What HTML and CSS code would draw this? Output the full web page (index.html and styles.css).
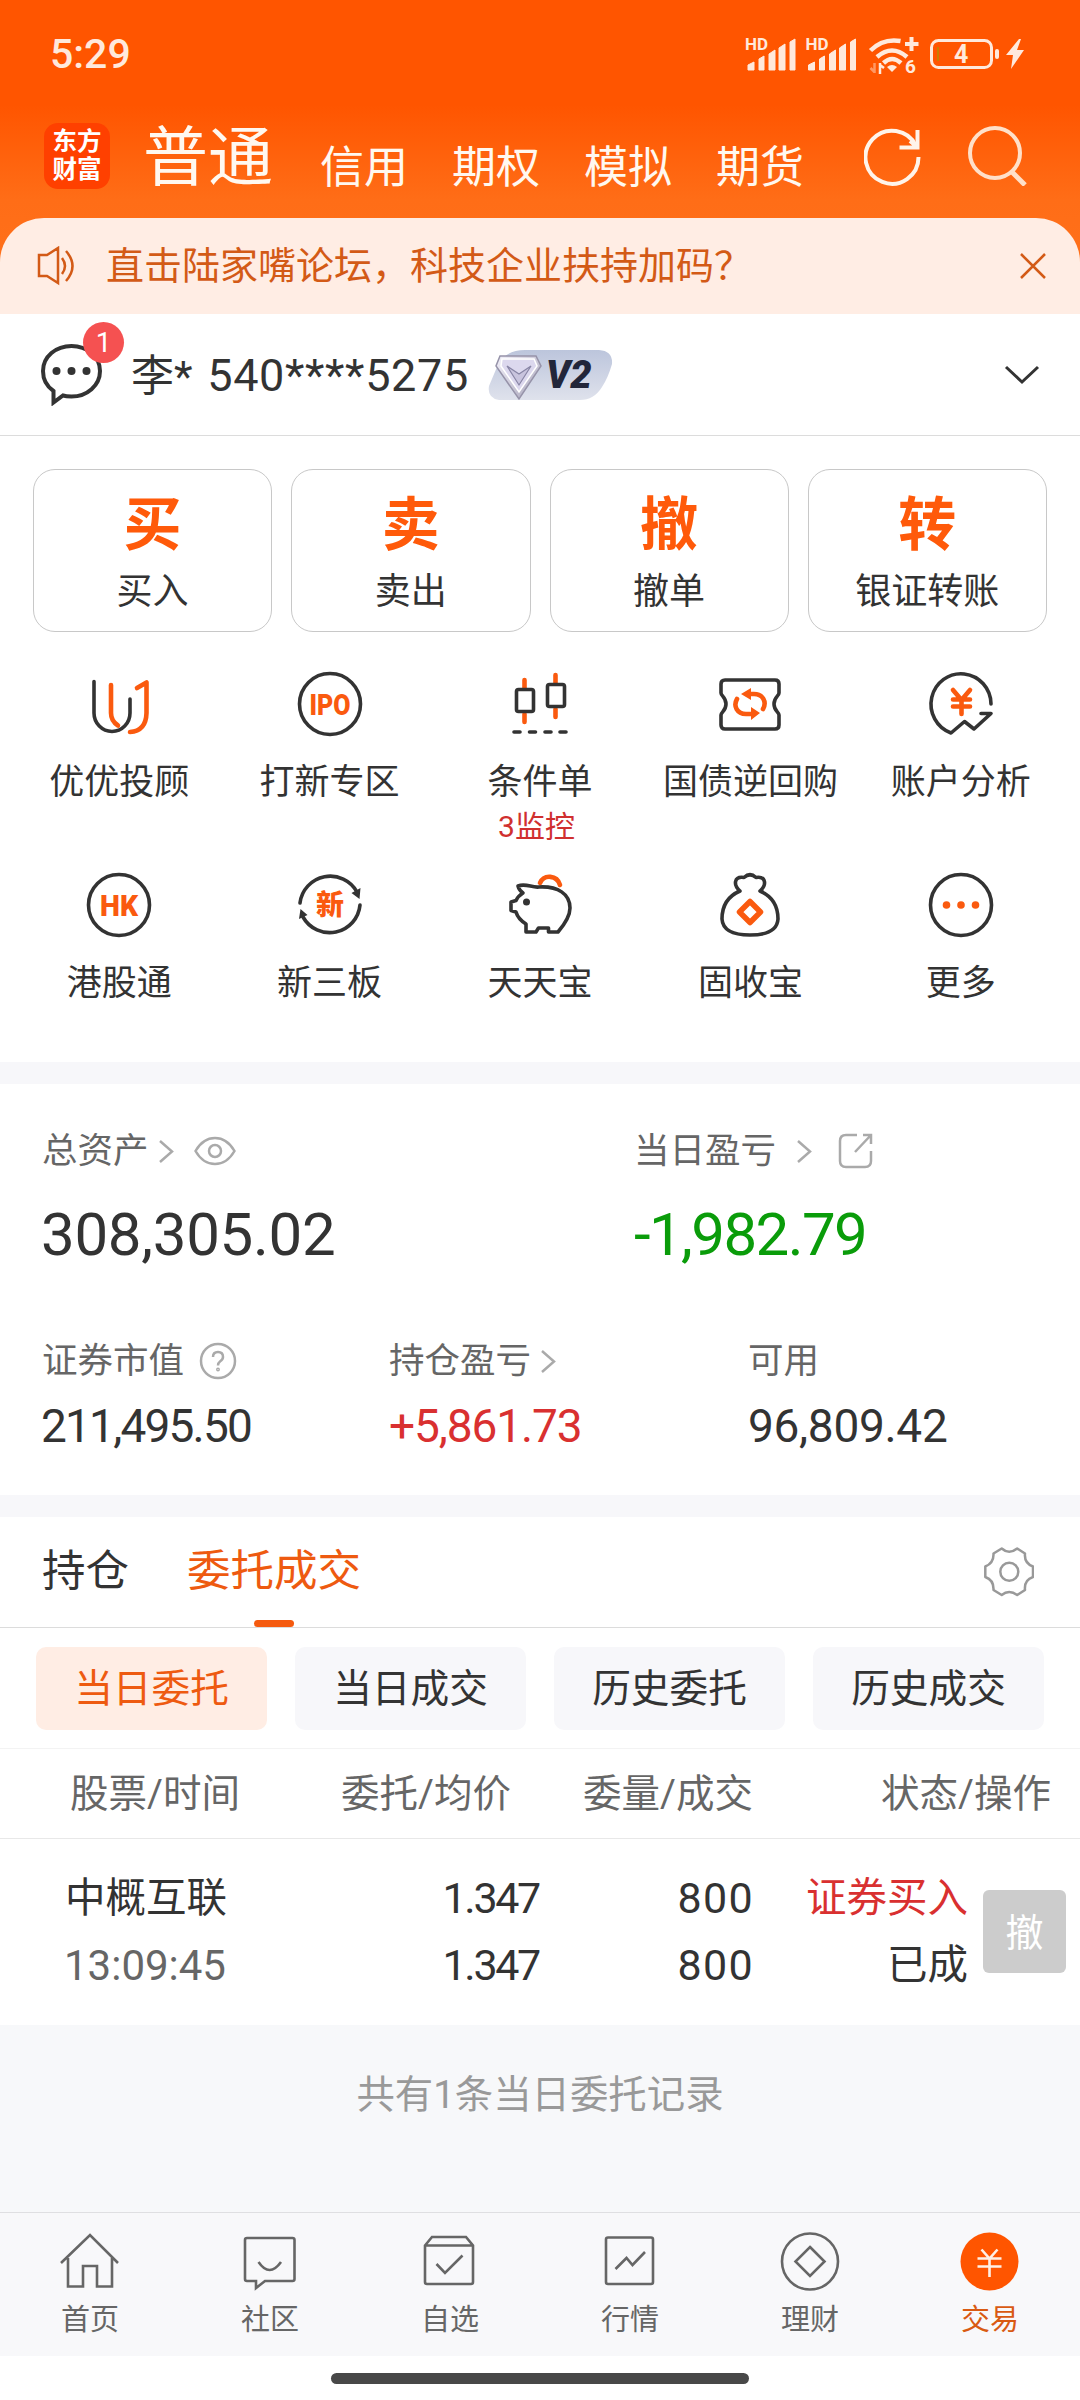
FILE: index.html
```html
<!DOCTYPE html>
<html lang="zh-CN">
<head>
  <meta charset="UTF-8">
  <meta name="viewport" content="width=device-width, initial-scale=1.0">
  <title>交易</title>
  <link rel="stylesheet" href="styles.css">
</head>
<body>
  <!-- 顶部 -->
  <header class="header">
    <div class="status">
      <span class="clock">5:29</span>
      <svg class="status-icons" width="290" height="44" viewBox="0 0 290 44">
        <g id="signal" fill="#ffe9dc">
          <text x="5" y="18" class="hd">HD</text>
          <path d="M8 38v-5l6-3v8zM19 38V27l5-3v14zM29 38V22l6-4v20zM39 38V16l6-4v26zM50 38V10l5-3v31z" stroke="#ffe9dc" stroke-linejoin="round"/>
        </g>
        <use href="#signal" x="60.5"/>
        <g fill="none" stroke="#ffe9dc" stroke-width="4.5">
          <path d="M130.500 18.500Q143 6 160.500 9"/>
          <path d="M137 25Q152 12 167 25"/>
          <path d="M143.500 31Q152 23 161 31"/>
        </g>
        <path d="M147 35q5-4 10 0l-5 5z" fill="#ffe9dc"/>
        <path d="M171.500 5v14M165 12h13.500" stroke="#ffe9dc" stroke-width="4"/>
        <text x="165" y="41" class="wifi-num">6</text>
        <path d="M140 31v11M140 33l4 3" stroke="#ffe9dc" stroke-width="2.500"/>
        <path d="M134.500 31v10M134.500 40l-4-4" stroke="#ffe9dc" stroke-width="2.500" opacity=".45"/>
        <rect x="191.500" y="8.500" width="60" height="27" rx="7" fill="none" stroke="#ffe9dc" stroke-width="3"/>
        <path d="M198 15v14" stroke="#b98a00" stroke-width="1.500"/>
        <rect x="255" y="17" width="4" height="10" rx="2" fill="#ffe9dc"/>
        <text x="214" y="31" class="battery-num">4</text>
        <path d="M279 7l-13 16h7l-2 14 13-19h-7l4-11z" fill="#ffe9dc"/>
      </svg>
    </div>
    <nav class="top-nav">
      <div class="logo">东方<br>财富</div>
      <span class="top-tab current">普通</span>
      <span class="top-tab">信用</span>
      <span class="top-tab">期权</span>
      <span class="top-tab">模拟</span>
      <span class="top-tab">期货</span>
      <svg class="refresh" width="58" height="58" viewBox="0 0 58 58" fill="none" stroke="#fff4ea" stroke-width="4">
        <path d="M54.500 29A26.500 26.500 0 1 1 52 18"/>
        <path d="M53.500 2v17.500H35.500M46 13l7 6"/>
      </svg>
      <svg class="search" width="60" height="60" viewBox="0 0 60 60" fill="none" stroke="#ffe0c9" stroke-width="4">
        <circle cx="27" cy="27" r="25"/>
        <path d="M43 45l14 14" stroke-width="5"/>
      </svg>
    </nav>
  </header>

  <!-- 公告 -->
  <div class="notice">
    <svg width="40" height="40" viewBox="0 0 40 40" fill="none" stroke="#d35a16" stroke-width="2.500">
      <path d="M2 9h8l11-7v35l-11-7H2z"/>
      <path d="M25 12q6 8 0 16M29 5q13 15 0 30"/>
    </svg>
    <p>直击陆家嘴论坛，科技企业扶持加码？</p>
    <svg width="26" height="26" viewBox="0 0 26 26" stroke="#d35a16" stroke-width="2.500"><path d="M1 1l24 24M25 1L1 25"/></svg>
  </div>

  <!-- 账户 -->
  <section class="account">
    <div class="chat">
      <svg width="62" height="62" viewBox="0 0 62 62">
        <path d="M12.500 47V58.500L22 51.500C25 52.500 28 52.500 30.500 52.500 46 52.500 59 41.500 59 27S46 2 30.500 2 2 12.500 2 27C2 35 6 42.500 12.500 47z" fill="none" stroke="#333" stroke-width="4"/>
        <g fill="#333"><circle cx="15.500" cy="27" r="4"/><circle cx="30.500" cy="27" r="4"/><circle cx="45.500" cy="27" r="4"/></g>
      </svg>
      <span class="badge">1</span>
    </div>
    <span class="account-name">李* <b>540****5275</b></span>
    <svg class="level" width="126" height="52" viewBox="0 0 126 52">
      <defs>
        <linearGradient id="pill" x1="0" y1="0" x2="0" y2="1"><stop offset="0" stop-color="#bcc5dc"/><stop offset="1" stop-color="#dfe2ec"/></linearGradient>
        <linearGradient id="gem" x1="0" y1="0" x2="1" y2="1"><stop offset="0" stop-color="#f4f2fb"/><stop offset="1" stop-color="#a5a2b8"/></linearGradient>
      </defs>
      <path d="M37 1h74q14 1 13 14-4 14-10 23-8 13-22 13H11Q-1 49 1 37L9 18Q16 1 37 1z" fill="url(#pill)"/>
      <path d="M12 7h36l5 10-22 33L8 17z" fill="url(#gem)" stroke="#9693a9" stroke-width="1.500"/>
      <path d="M14 10h32l3 7-18 26-18-26z" fill="#dcd8ee" stroke="#fff" stroke-width="1.500"/>
      <path d="M19 17l12 8 12-8-12 19z" fill="#c9c4de" stroke="#8885a5" stroke-width="1.200"/>
      <text x="58" y="39" class="level-text">V2</text>
    </svg>
    <svg class="expand" width="36" height="20" viewBox="0 0 36 20" fill="none" stroke="#333" stroke-width="3"><path d="M2 2l16 15L34 2"/></svg>
  </section>

  <!-- 买卖入口 -->
  <section class="actions">
    <div class="action"><strong>买</strong><span>买入</span></div>
    <div class="action"><strong>卖</strong><span>卖出</span></div>
    <div class="action"><strong>撤</strong><span>撤单</span></div>
    <div class="action"><strong>转</strong><span>银证转账</span></div>
  </section>

  <!-- 功能宫格 -->
  <section class="services">
    <div class="service">
      <svg viewBox="0 0 64 64">
        <path class="dark" d="M7 9.500V41a18 18.500 0 0 0 36 0V27"/>
        <path class="hot" d="M24 13v28q0 8 7 12.500M50 16l9.500-5.500V41Q59 59 43 60"/>
      </svg>
      <span>优优投顾</span>
    </div>
    <div class="service">
      <svg viewBox="0 0 64 64">
        <circle class="dark" cx="32" cy="32" r="30.500"/>
        <text x="11.500" y="42.500" textLength="41" lengthAdjust="spacingAndGlyphs">IPO</text>
      </svg>
      <span>打新专区</span>
    </div>
    <div class="service">
      <svg viewBox="0 0 64 64">
        <path class="hot" d="M16.500 8v8M16.500 42v8M47.500 3v8M47.500 37v8"/>
        <rect class="dark" x="8.500" y="17.500" width="17" height="22" rx="2"/>
        <rect class="dark" x="39.500" y="12.500" width="17" height="22" rx="2"/>
        <path class="dark" d="M6 60h6M21.500 60h6M37 60h6M52 60h6"/>
      </svg>
      <span>条件单</span>
      <em>3监控</em>
    </div>
    <div class="service">
      <svg viewBox="0 0 64 64">
        <path class="dark" d="M7 8h50q4 0 4 4v9c0 3-5 4-5 11s5 8 5 11v10q0 4-4 4H7q-4 0-4-4V43c0-3 5-4 5-11s-5-8-5-11v-9q0-4 4-4z"/>
        <path class="hot" d="M31 22h5c9 0 13 8 9 15M33 42h-5c-9 0-13-8-9-15"/>
        <path class="hot-fill" d="M33 16v12l-10-6zM33 35v13l9-7z"/>
      </svg>
      <span>国债逆回购</span>
    </div>
    <div class="service">
      <svg viewBox="0 0 64 64">
        <path class="dark" d="M62 32A30 30.500 0 1 0 22 61l13.500-11.500L45 57l17-15.500H52"/>
        <path class="hot" d="M24 18l8.500 10L41 18M32.500 28v14M24 27.500h17M24 34.500h17"/>
      </svg>
      <span>账户分析</span>
    </div>
    <div class="service">
      <svg viewBox="0 0 64 64">
        <circle class="dark" cx="32" cy="32" r="30.500"/>
        <text x="13" y="42.500" textLength="38" lengthAdjust="spacingAndGlyphs">HK</text>
      </svg>
      <span>港股通</span>
    </div>
    <div class="service">
      <svg viewBox="0 0 64 64">
        <path class="dark" d="M2 30A30.500 30.500 0 0 1 59 19M62 32A30.500 30.500 0 0 1 5 44"/>
        <path class="dark-fill" d="M62.500 15l-1 11-8-6zM1 46l1.500-10 7 6z"/>
        <text x="18" y="42" class="cn">新</text>
      </svg>
      <span>新三板</span>
    </div>
    <div class="service">
      <svg viewBox="0 0 64 64">
        <path class="hot" d="M32 10c4-9 17-8 20 2"/>
        <path class="dark" d="M31 14c-7 1-13-4-21-1q1 4 5 7-5 3-7 7.500l-5 1.500v8.500l5 1.500q2 7 10 12v8h10l2.500-4h10v4H50c6-7 12-15 12-24 0-14-12-22-31-21z"/>
        <circle class="dark-fill" cx="18.500" cy="29" r="3.500"/>
      </svg>
      <span>天天宝</span>
    </div>
    <div class="service">
      <svg viewBox="0 0 64 64">
        <path class="dark" d="M22 18C8 24 4 34 4 46q1 16 28 16t28-16c0-12-4-22-18-28 7-6 6-15-4-13.500Q32-1 26 4.500C16 3 15 12 22 18zM22 18h-2M42 18h2"/>
        <path class="hot diamond" d="M32 28.500L42.500 39 32 49.500 21.500 39z"/>
      </svg>
      <span>固收宝</span>
    </div>
    <div class="service">
      <svg viewBox="0 0 64 64">
        <circle class="dark" cx="32" cy="32" r="30.500"/>
        <g class="hot-fill"><circle cx="17.500" cy="32" r="3.800"/><circle cx="32" cy="32" r="3.800"/><circle cx="46.500" cy="32" r="3.800"/></g>
      </svg>
      <span>更多</span>
    </div>
  </section>

  <!-- 资产 -->
  <section class="assets">
    <div class="asset-row main-row">
      <div class="asset">
        <div class="asset-label"><span>总资产</span>
          <svg class="arrow" width="15" height="24" viewBox="0 0 15 24"><path d="M1 2l12 10.500L1 23"/></svg>
          <svg class="eye" width="42" height="30" viewBox="0 0 42 30"><path d="M1.500 15Q9 2 21 2t19.500 13Q33 28 21 28T1.500 15z"/><circle cx="21" cy="15" r="6"/></svg>
        </div>
        <div class="asset-value total">308,305.02</div>
      </div>
      <div class="asset">
        <div class="asset-label"><span>当日盈亏</span>
          <svg class="arrow wide" width="15" height="24" viewBox="0 0 15 24"><path d="M1 2l12 10.500L1 23"/></svg>
          <svg class="share" width="36" height="36" viewBox="0 0 36 36"><path d="M19 2H8Q2 2 2 8v20q0 6 6 6h19q6 0 6-6V18M25 2h8v9M33 2L17 19"/></svg>
        </div>
        <div class="asset-value down">-1,982.79</div>
      </div>
    </div>
    <div class="asset-row sub-row">
      <div class="asset">
        <div class="asset-label"><span>证券市值</span>
          <svg class="help" width="38" height="38" viewBox="0 0 38 38"><circle cx="19" cy="19" r="17"/><path d="M14 15q0-5 5-5t5 5q0 2.500-3 4.500-2 1.500-2 4"/><circle cx="19" cy="27.500" r=".7"/></svg>
        </div>
        <div class="asset-value market">211,495.50</div>
      </div>
      <div class="asset">
        <div class="asset-label"><span>持仓盈亏</span>
          <svg class="arrow" width="15" height="24" viewBox="0 0 15 24"><path d="M1 2l12 10.500L1 23"/></svg>
        </div>
        <div class="asset-value up">+5,861.73</div>
      </div>
      <div class="asset">
        <div class="asset-label"><span>可用</span></div>
        <div class="asset-value">96,809.42</div>
      </div>
    </div>
  </section>

  <!-- 委托成交 -->
  <section class="orders">
    <div class="tabs">
      <span class="tab">持仓</span>
      <span class="tab active">委托成交</span>
      <svg class="gear" width="50" height="50" viewBox="0 0 50 50" fill="none" stroke="#999" stroke-width="2.500">
        <path d="M17.700 1.500Q25 8 33.200 1.500L41 6.500Q40 16 49 19.500V30Q40 33 41 43L33.200 48Q25 42 17.700 48L9.500 43Q10 33 1.300 30V19.500Q10 16 9.500 6.500z" stroke-linejoin="round"/>
        <circle cx="25.300" cy="24.800" r="9"/>
      </svg>
    </div>
    <div class="chips">
      <span class="chip on">当日委托</span>
      <span class="chip">当日成交</span>
      <span class="chip">历史委托</span>
      <span class="chip">历史成交</span>
    </div>
    <div class="table-head">
      <span>股票/时间</span>
      <span>委托/均价</span>
      <span>委量/成交</span>
      <span>状态/操作</span>
    </div>
    <div class="order">
      <div class="cell name"><span>中概互联</span><span class="time">13:09:45</span></div>
      <div class="cell price"><span>1.347</span><span>1.347</span></div>
      <div class="cell amount"><span>800</span><span>800</span></div>
      <div class="cell state"><span class="buy">证券买入</span><span>已成</span></div>
      <button class="cancel">撤</button>
    </div>
  </section>
  <p class="summary">共有1条当日委托记录</p>

  <!-- 底部导航 -->
  <nav class="bottom-nav">
    <div class="nav-item">
      <svg viewBox="0 0 60 60"><path d="M1 31L30 3l28 28M8 26v28.500h15V34h14v20.500h15V26"/></svg>
      <span>首页</span>
    </div>
    <div class="nav-item">
      <svg viewBox="0 0 60 60"><path d="M7 6h45.500q2 0 2 2v39q0 2-2 2H25l-9 7v-7H7q-2 0-2-2V8q0-2 2-2zM18.500 30q11 16 22.500 0"/></svg>
      <span>社区</span>
    </div>
    <div class="nav-item">
      <svg viewBox="0 0 60 60"><path d="M5 13.500L12 5h34l7 8.500V50q0 2-2 2H7q-2 0-2-2zM5 13.500h48M16.500 32l8.500 9 17.500-17.500"/></svg>
      <span>自选</span>
    </div>
    <div class="nav-item">
      <svg viewBox="0 0 60 60"><rect x="6" y="5.500" width="47" height="46.500" rx="2"/><path d="M15.500 37l11-11 6 7L45 20"/></svg>
      <span>行情</span>
    </div>
    <div class="nav-item">
      <svg viewBox="0 0 60 60"><circle cx="30" cy="29.500" r="28"/><path d="M30 15l14.500 14.500L30 44 15.500 29.500z"/></svg>
      <span>理财</span>
    </div>
    <div class="nav-item selected">
      <svg viewBox="0 0 60 60"><circle cx="29.500" cy="29.500" r="29"/><path d="M21.500 17.500l8 9 8-9M29.500 26v19M17.500 26.500h24M17.500 34.500h24"/></svg>
      <span>交易</span>
    </div>
  </nav>
  <div class="home-bar"><i></i></div>
</body>
</html>
```
FILE: styles.css
```css
* {
  box-sizing: border-box;
}

body {
  margin: 0;
  width: 1080px;
  height: 2400px;
  overflow: hidden;
  display: flex;
  flex-direction: column;
  background: #fff;
  color: #333;
  font-family: Roboto, "Noto Sans CJK SC", sans-serif;
}

p {
  margin: 0;
}

svg {
  display: block;
  flex: none;
}

/* 顶部 */
.header {
  height: 262px;
  margin-bottom: -44px;
  background: linear-gradient(#ff5500 105px, #ff6d17 200px, #ff701a);
}

.status {
  display: flex;
  justify-content: space-between;
  height: 110px;
  padding: 32px 50px 0 50px;
}

.clock {
  font-size: 41px;
  font-weight: 500;
  line-height: 45px;
  color: #ffe9dc;
}

.status-icons {
  overflow: visible;
}

.hd {
  font: bold 17px Roboto, sans-serif;
}

.wifi-num {
  font: bold 19px Roboto, sans-serif;
  fill: #ffe9dc;
}

.battery-num {
  font: bold 25px Roboto, sans-serif;
  fill: #ffe9dc;
}

.top-nav {
  display: flex;
  align-items: flex-end;
  height: 86px;
  padding-left: 44px;
  color: #fff8f0;
}

.logo {
  width: 66px;
  height: 66px;
  margin: 0 33px 7px 0;
  padding-top: 5px;
  border-radius: 14px;
  background: #ff4000;
  color: #fff;
  font-size: 24.5px;
  font-weight: 700;
  line-height: 28px;
  text-align: center;
}

.top-tab {
  margin-right: 44px;
  font-size: 44px;
  line-height: 55px;
}

.top-tab.current {
  margin-right: 47px;
  font-size: 65px;
  line-height: 76px;
}

.refresh {
  margin: 0 46px 10px 16px;
}

.search {
  margin-bottom: 10px;
}

/* 公告 */
.notice {
  display: flex;
  align-items: center;
  height: 96px;
  padding: 0 34px 0 37px;
  border-radius: 44px 44px 0 0;
  background: #ffede4;
  color: #d35a16;
}

.notice p {
  flex: 1;
  padding-left: 29px;
  font-size: 38px;
  line-height: 50px;
}

/* 账户 */
.account {
  display: flex;
  align-items: center;
  height: 122px;
  padding: 0 40px 0 41px;
  border-bottom: 1px solid #dcdcdc;
}

.chat {
  position: relative;
}

.badge {
  position: absolute;
  left: 42px;
  top: -22px;
  width: 41px;
  height: 41px;
  border-radius: 50%;
  background: #f55151;
  color: #fff;
  font-size: 28px;
  line-height: 42px;
  text-align: center;
}

.account-name {
  margin-left: 28px;
  padding-bottom: 5px;
  font-size: 43px;
}

.account-name b {
  margin-left: 4px;
  font-size: 45px;
  font-weight: 400;
  letter-spacing: .65px;
}

.level {
  margin-left: 19px;
}

.level-text {
  font: italic 900 38px Roboto, sans-serif;
  fill: #22263a;
}

.expand {
  margin-left: auto;
}

/* 买卖入口 */
.actions {
  display: grid;
  grid-template-columns: repeat(4, 1fr);
  gap: 19px;
  height: 197px;
  padding: 33px 33px 0;
}

.action {
  display: flex;
  flex-direction: column;
  align-items: center;
  height: 163px;
  padding-top: 19px;
  border: 1px solid #c8c8c8;
  border-radius: 22px;
}

.action strong {
  font-size: 58px;
  line-height: 72px;
  color: #ff5a0a;
}

.action span {
  font-size: 36px;
  line-height: 62px;
}

/* 功能宫格 */
.services {
  display: grid;
  grid-template-columns: repeat(5, 1fr);
  grid-auto-rows: 201px;
  height: 429px;
  padding: 39px 14px 0;
}

.service {
  display: flex;
  flex-direction: column;
  align-items: center;
}

.service svg {
  width: 64px;
  height: 64px;
  overflow: visible;
}

.service span {
  margin-top: 22px;
  font-size: 35px;
  line-height: 50px;
}

.service em {
  margin-right: 7px;
  font-size: 30px;
  font-style: normal;
  line-height: 38px;
  color: #d0302f;
}

.service text {
  font: 900 30px Roboto, sans-serif;
  fill: #fa5a0f;
}

.service .cn {
  font: 900 28px "Noto Sans CJK SC", sans-serif;
}

.dark,
.hot {
  fill: none;
  stroke: #333;
  stroke-width: 3.6;
  stroke-linecap: round;
  stroke-linejoin: round;
}

.hot {
  stroke: #fa5a0f;
  stroke-width: 4.6;
}

.diamond {
  stroke-width: 5.5;
}

.dark-fill {
  fill: #333;
}

.hot-fill {
  fill: #fa5a0f;
}

/* 资产 */
.assets {
  height: 455px;
  border-top: 22px solid #f7f7fa;
  border-bottom: 22px solid #f7f7fa;
  padding: 41px 0 0 42px;
}

.asset-row {
  display: grid;
}

.main-row {
  grid-template-columns: 592px 1fr;
  height: 210px;
}

.sub-row {
  grid-template-columns: 347px 359px 1fr;
}

.asset-label {
  display: flex;
  align-items: center;
  height: 51px;
  font-size: 35.5px;
  line-height: 50px;
  color: #666;
}

.asset-label svg {
  fill: none;
  stroke: #aaa;
  stroke-width: 2.5;
}

.arrow {
  margin-left: 10px;
}

.arrow.wide {
  margin-left: 21px;
}

.eye {
  margin-left: 20px;
}

.share {
  margin-left: 26px;
}

.help {
  margin-left: 15px;
}

.asset-value {
  margin-top: 13px;
  font-size: 46px;
  line-height: 54px;
  letter-spacing: -.3px;
}

.main-row .asset-value {
  margin-top: 24px;
  font-size: 60px;
  line-height: 70px;
}

.asset-value.total {
  margin-left: -1px;
}

.asset-value.market {
  margin-left: -1px;
  letter-spacing: -1.8px;
}

.asset-value.up {
  color: #d93030;
  letter-spacing: -1.1px;
}

.asset-value.down {
  color: #0a9c0a;
  letter-spacing: -1.6px;
}

/* 委托成交 */
.orders {
  height: 508px;
}

.tabs {
  display: flex;
  align-items: center;
  height: 111px;
  padding: 0 46px 0 42px;
  border-bottom: 1px solid #dcdcdc;
}

.tab {
  position: relative;
  margin-right: 58px;
  font-size: 43.5px;
  line-height: 56px;
}

.tab.active {
  color: #ee5a10;
}

.tab.active::after {
  content: "";
  position: absolute;
  left: 67px;
  bottom: -27px;
  width: 40px;
  height: 7px;
  border-radius: 4px;
  background: #f55a0f;
}

.gear {
  margin-left: auto;
}

.chips {
  display: grid;
  grid-template-columns: repeat(4, 231px);
  gap: 28px;
  height: 121px;
  padding: 19px 36px;
  border-bottom: 1px solid #f3f3f3;
}

.chip {
  border-radius: 10px;
  background: #f7f7fa;
  font-size: 38.7px;
  line-height: 83px;
  text-align: center;
}

.chip.on {
  background: #ffede4;
  color: #ee5a10;
}

.table-head {
  display: grid;
  grid-template-columns: 240px 271px 242px 298px;
  height: 90px;
  border-bottom: 1px solid #e8e8e8;
  font-size: 38.5px;
  line-height: 89px;
  color: #666;
  text-align: right;
}

.order {
  display: grid;
  grid-template-columns: 240px 299px 215px 214px 98px;
  align-items: center;
  height: 185px;
}

.cell {
  display: flex;
  flex-direction: column;
  font-size: 43px;
  line-height: 67px;
  text-align: right;
  white-space: nowrap;
}

.name {
  padding-left: 65px;
  font-size: 40.5px;
  text-align: left;
}

.time {
  margin-left: -1px;
  font-size: 42px;
  color: #666;
}

.price {
  letter-spacing: -2.3px;
}

.amount {
  letter-spacing: 1.3px;
}

.state {
  font-size: 40.5px;
}

.buy {
  color: #d93030;
}

.cancel {
  width: 83px;
  height: 83px;
  margin-left: 15px;
  padding: 0 0 4px;
  border: 0;
  border-radius: 6px;
  background: #ccc;
  color: #fff;
  font: 38px Roboto, "Noto Sans CJK SC", sans-serif;
}

.summary {
  height: 187px;
  background: #f7f8fa;
  color: #999;
  font-size: 38.4px;
  line-height: 140px;
  text-align: center;
}

/* 底部导航 */
.bottom-nav {
  display: grid;
  grid-template-columns: repeat(6, 1fr);
  height: 144px;
  border-top: 1px solid #dfdfe2;
  background: #f8f8fa;
}

.nav-item {
  display: flex;
  flex-direction: column;
  align-items: center;
  padding-top: 19px;
  font-size: 29px;
  line-height: 57px;
  color: #666;
}

.nav-item svg {
  width: 60px;
  height: 60px;
  fill: none;
  stroke: #666;
  stroke-width: 2.6;
}

.nav-item.selected {
  color: #d95a12;
}

.selected circle {
  fill: #ff5500;
  stroke: none;
}

.selected path {
  stroke: #fff0e6;
}

.home-bar {
  display: flex;
  justify-content: center;
  padding-top: 17px;
}

.home-bar i {
  width: 418px;
  height: 11px;
  border-radius: 6px;
  background: #484848;
}
```
